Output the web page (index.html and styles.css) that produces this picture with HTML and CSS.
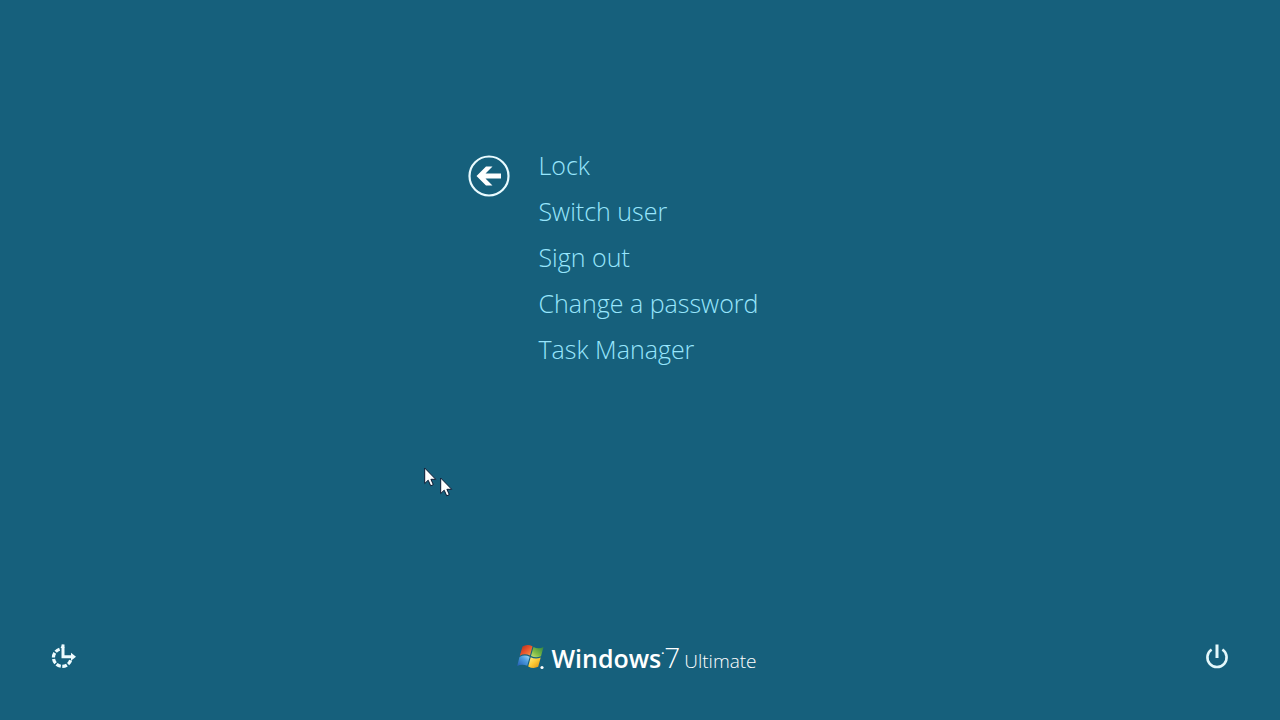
FILE: index.html
```
<!DOCTYPE html>
<html lang="en">
  <head>
    <meta charset="utf-8">
    <meta name="viewport" content="width=device-width, initial-scale=1">
    <title>Windows 7 Ultimate</title>
    <link rel="stylesheet" href="styles.css">
  </head>
  <body>
    <!-- SECURITY OPTIONS -->
    <main class="options">
      <button class="back" type="button" aria-label="Back">
        <svg width="42" height="42" viewBox="0 0 42 42">
          <circle cx="21" cy="21" r="19.5" fill="none" stroke="#e9fbff" stroke-width="2.2"/>
          <path d="M8.5 21 L18 11.5 H24.5 L17.5 18.6 H33 V23.4 H17.5 L24.5 30.5 H18 Z" fill="#fff"/>
        </svg>
      </button>
      <ul class="option-list">
        <li><button class="option" type="button">Lock</button></li>
        <li><button class="option" type="button">Switch user</button></li>
        <li><button class="option" type="button">Sign out</button></li>
        <li><button class="option" type="button">Change a password</button></li>
        <li><button class="option" type="button">Task Manager</button></li>
      </ul>
    </main>

    <!-- BOTTOM BAR -->
    <footer class="bottom-bar">
      <button class="corner-button" type="button" aria-label="Ease of access">
        <svg width="28" height="28" viewBox="0 0 28 28">
          <path d="M10.6 6.2 A8.8 8.8 0 1 0 21.8 16.6" fill="none" stroke="#eefcff" stroke-width="3.2" stroke-dasharray="4.7 1.5"/>
          <path d="M14 1.5 V13.8 H24" fill="none" stroke="#eefcff" stroke-width="3"/>
          <path d="M11.5 5 L14 1 L15.5 5 Z M22 9.8 L27 13.8 L22 17.8 Z" fill="#eefcff"/>
        </svg>
      </button>
      <div class="brand">
        <svg class="flag" width="30" height="30" viewBox="0 0 30 30">
          <defs>
            <linearGradient id="red" x1="0" y1="0" x2="1" y2="1">
              <stop offset="0" stop-color="#a92b1d"/>
              <stop offset="0.5" stop-color="#e9532b"/>
              <stop offset="1" stop-color="#f7a04c"/>
            </linearGradient>
            <linearGradient id="green" x1="1" y1="0" x2="0" y2="1">
              <stop offset="0" stop-color="#2f8441"/>
              <stop offset="0.6" stop-color="#82bd45"/>
              <stop offset="1" stop-color="#c9e27a"/>
            </linearGradient>
            <linearGradient id="blue" x1="0" y1="1" x2="1" y2="0">
              <stop offset="0" stop-color="#215bb0"/>
              <stop offset="0.6" stop-color="#4d9de0"/>
              <stop offset="1" stop-color="#a6dcf5"/>
            </linearGradient>
            <linearGradient id="yellow" x1="0" y1="0" x2="1" y2="1">
              <stop offset="0" stop-color="#fff08a"/>
              <stop offset="0.5" stop-color="#fcc934"/>
              <stop offset="1" stop-color="#d98b13"/>
            </linearGradient>
          </defs>
          <path d="M5.5 4.5 Q10 1.5 15.5 4.2 L13 13.5 Q7.5 11 2.8 13.8 Z" fill="url(#red)"/>
          <path d="M16.5 5 Q21.5 7.5 26.5 5 L24 14.3 Q19 16.5 14 14 Z" fill="url(#green)"/>
          <path d="M2.5 15 Q7.5 12.3 12.7 14.7 L10.2 23.8 Q5 21.5 0.2 24 Z" fill="url(#blue)"/>
          <path d="M13.7 15.2 Q18.5 17.7 23.7 15.6 L21.2 24.8 Q16.2 27.2 11.2 24.4 Z" fill="url(#yellow)"/>
          <circle cx="25" cy="25.5" r="1.6" fill="#fff"/>
        </svg>
        <p class="brand-text"><span class="brand-name">Windows</span><span class="brand-mark">&bull;</span><span class="brand-version">7</span><span class="brand-edition">Ultimate</span></p>
      </div>
      <button class="corner-button" type="button" aria-label="Shut down">
        <svg width="28" height="28" viewBox="0 0 28 28">
          <path d="M8.6 6.5 A9.6 9.6 0 1 0 19.4 6.5" fill="none" stroke="#e4f8fb" stroke-width="2.6"/>
          <path d="M14 1.5 V15" stroke="#e4f8fb" stroke-width="3"/>
        </svg>
      </button>
    </footer>

    <!-- POINTERS -->
    <svg class="pointer pointer-first" width="13" height="20" viewBox="0 0 13 20" aria-hidden="true">
      <path d="M0.7 1 V16.5 L4.2 13.2 L6.7 18.8 L9.3 17.6 L6.9 12.3 H11.7 Z" fill="#fff" stroke="#0b1a33"/>
    </svg>
    <svg class="pointer pointer-second" width="13" height="20" viewBox="0 0 13 20" aria-hidden="true">
      <path d="M0.7 1 V16.5 L4.2 13.2 L6.7 18.8 L9.3 17.6 L6.9 12.3 H11.7 Z" fill="#fff" stroke="#0b1a33"/>
    </svg>
  </body>
</html>
```
FILE: styles.css
```
* {
  box-sizing: border-box;
}
body {
  display: flex;
  flex-direction: column;
  justify-content: space-between;
  position: relative;
  min-height: 100vh;
  margin: 0;
  background: #16607c;
  color: #fff;
  font-family: "Open Sans", "Noto Sans", sans-serif;
}
button {
  padding: 0;
  border: 0;
  background: none;
  color: inherit;
  font: inherit;
  cursor: pointer;
}
svg {
  display: block;
}
/* SECURITY OPTIONS */
.options {
  display: flex;
  align-items: flex-start;
  gap: 28px;
  padding: 19.7vh 20px 0 36.6%;
}
.back {
  margin-top: 13px;
  border-radius: 50%;
}
.option-list {
  margin: 0;
  padding: 0;
  list-style: none;
}
.option {
  display: block;
  color: #98e6fd;
  font-size: 25px;
  font-weight: 300;
  line-height: 46px;
  text-align: left;
}
.option:hover {
  color: #fff;
}
/* BOTTOM BAR */
.bottom-bar {
  display: grid;
  grid-template-columns: 1fr auto 1fr;
  align-items: center;
  padding: 0 49px 39px;
}
.corner-button:last-child {
  justify-self: end;
}
.corner-button:first-child {
  justify-self: start;
}
.brand {
  display: flex;
  align-items: center;
  gap: 4px;
  padding-right: 6px;
}
.brand-text {
  display: flex;
  align-items: baseline;
  margin: 0;
  padding-top: 4px;
  line-height: 40px;
}
.brand-name {
  font-size: 25px;
  font-weight: 600;
}
.brand-mark {
  align-self: flex-start;
  line-height: 32px;
  font-size: 8px;
}
.brand-version {
  font-size: 28px;
  font-weight: 300;
}
.brand-edition {
  margin-left: 4px;
  font-size: 19px;
  font-weight: 300;
}
/* POINTERS */
.pointer {
  position: absolute;
  pointer-events: none;
}
.pointer-first {
  top: 64.8%;
  left: 33.1%;
}
.pointer-second {
  top: 66.2%;
  left: 34.4%;
}
```
